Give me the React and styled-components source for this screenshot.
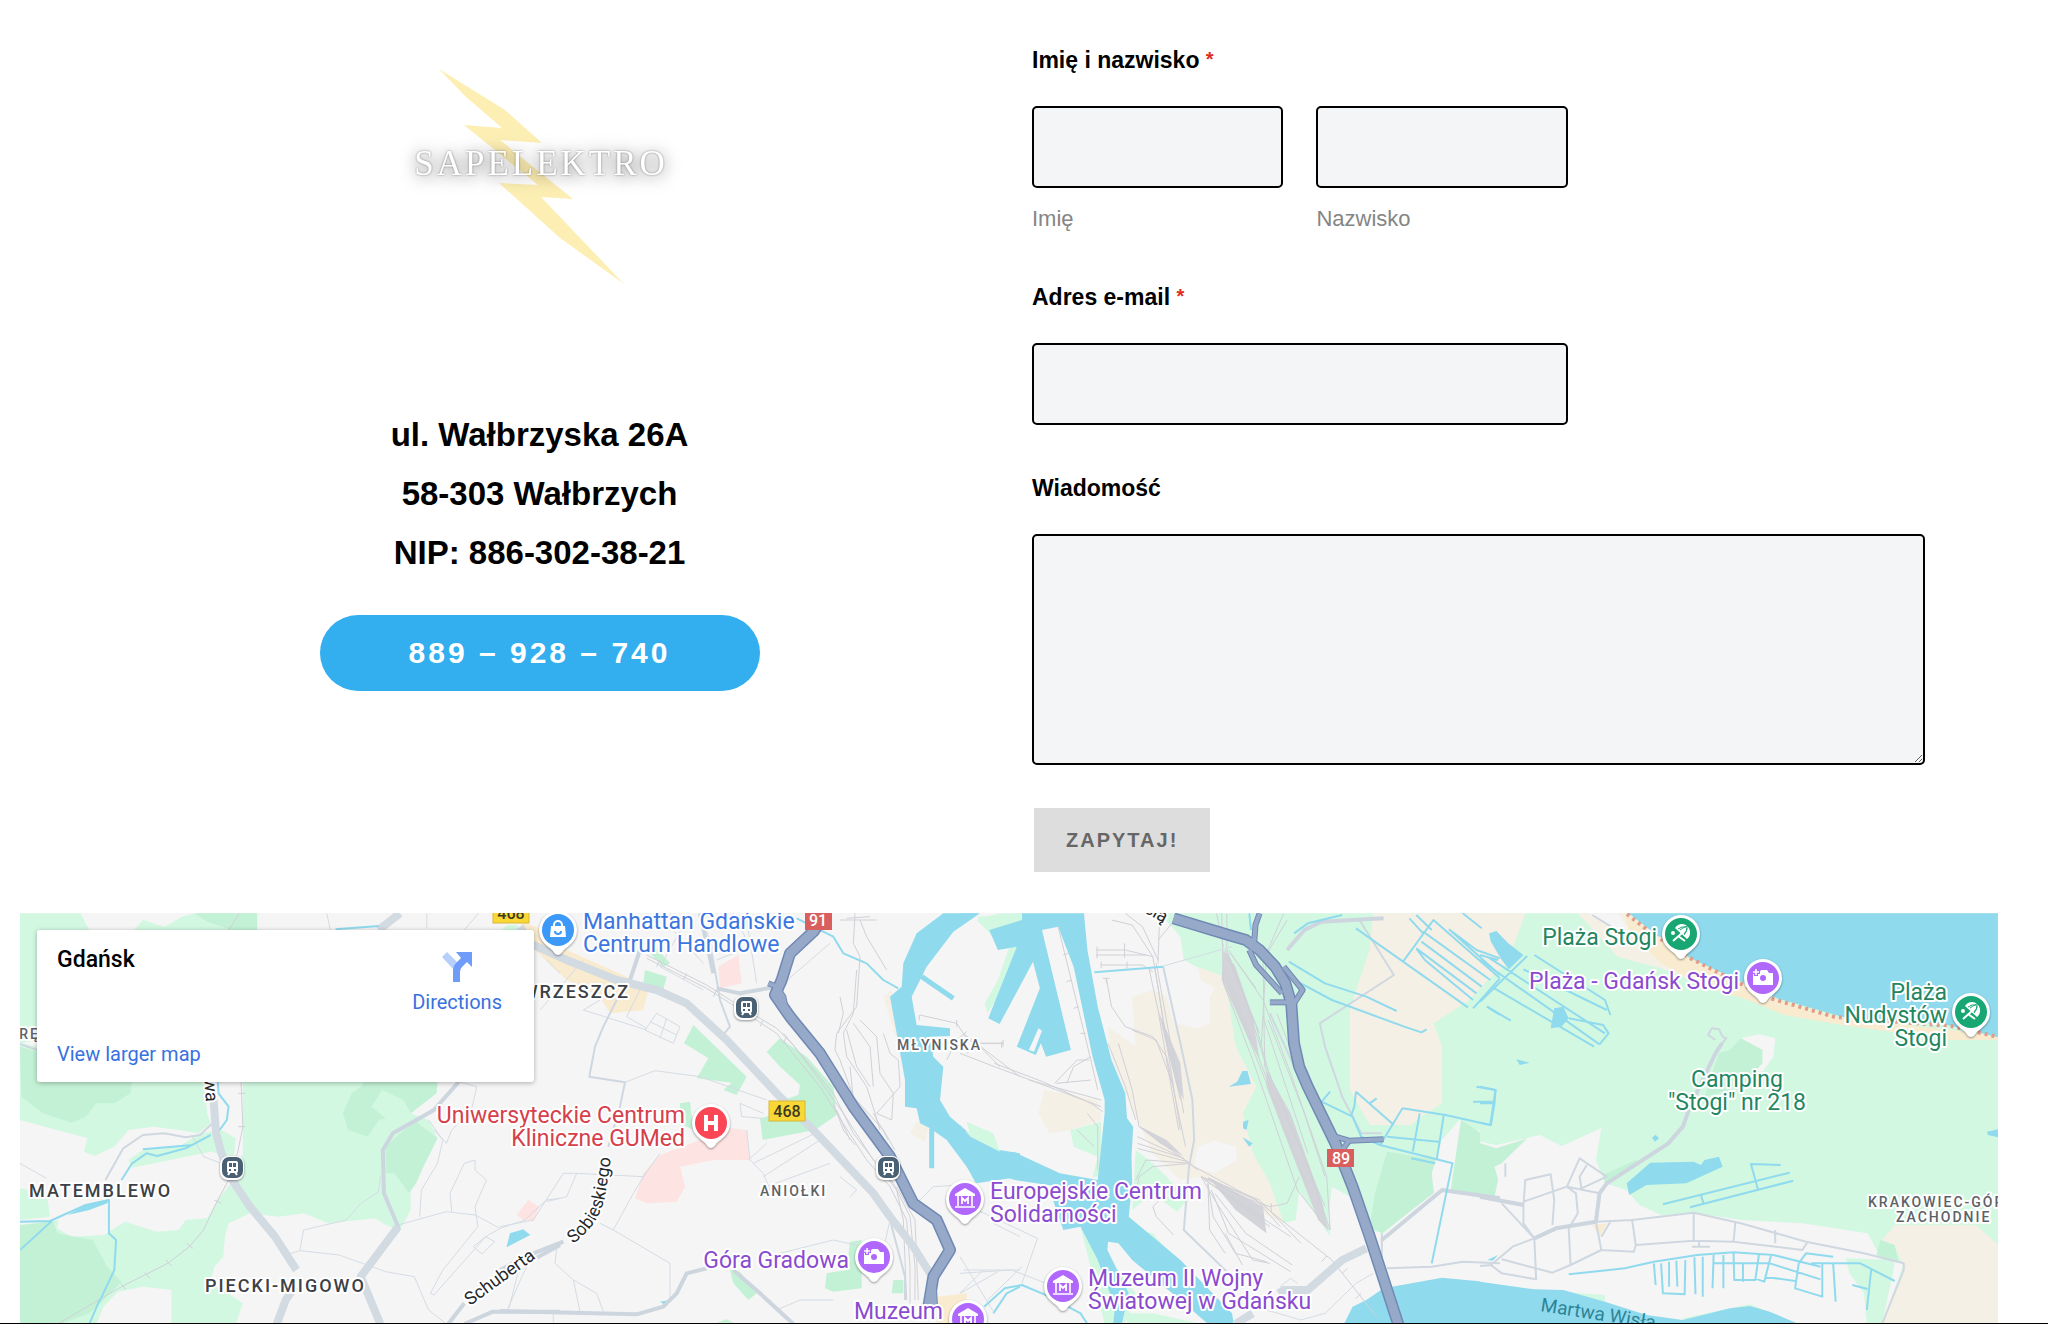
import React from "react";
import styled, { createGlobalStyle } from "styled-components";

const GlobalStyle = createGlobalStyle`
  * {
    box-sizing: border-box;
  }
  body {
    margin: 0;
    background-color: #fff;
    color: #000;
    font-family: "Liberation Sans", Arial, sans-serif;
  }
`;

const Page = styled.main`
  border-bottom: 1px solid #000;
`;
const Contact = styled.section`
  display: grid;
  grid-template-columns: 1fr 1fr;
  padding: 0 100px 41px 70px;
`;
const Company = styled.div`
  display: flex;
  flex-direction: column;
  align-items: center;
  padding-top: 40px;
`;
const Logo = styled.svg`
  width: 300px;
  height: 260px;
  margin-bottom: 105px;
`;
const LogoText = styled.text`
  font-family: "Liberation Serif", serif;
  font-size: 35px;
  letter-spacing: 3px;
  fill: #fff;
  text-anchor: middle;
  filter: drop-shadow(0 0 1px rgba(0, 0, 0, 0.4))
    drop-shadow(0 2px 8px rgba(0, 0, 0, 0.55));
`;
const Address = styled.address`
  font-size: 33px;
  font-style: normal;
  font-weight: 700;
  line-height: 59px;
  text-align: center;
`;
const Phone = styled.a`
  display: flex;
  align-items: center;
  justify-content: center;
  width: 440px;
  height: 76px;
  margin-top: 33px;
  border-radius: 38px;
  background-color: #33aeef;
  color: #fff;
  font-size: 30px;
  font-weight: 700;
  letter-spacing: 3px;
  text-decoration: none;
`;

const Form = styled.form`
  display: flex;
  flex-direction: column;
  align-items: flex-start;
  padding: 45px 23px 0;
`;
const Field = styled.div`
  width: ${({ $wide }) => ($wide ? "100%" : "60%")};
  margin: 0 0 ${({ $last }) => ($last ? "43px" : "48px")};
`;
const Label = styled.label`
  display: block;
  margin-bottom: 31px;
  font-size: 23px;
  font-weight: 700;
  line-height: 30px;
`;
const Required = styled.span`
  color: #e02b20;
  font-size: 20px;
  line-height: 1;
  vertical-align: 2px;
`;
const NameRow = styled.div`
  display: grid;
  grid-template-columns: 1fr 1fr;
  gap: 33px;
`;
const Input = styled.input`
  display: block;
  width: 100%;
  height: 82px;
  padding: 0 16px;
  border: 2px solid #000;
  border-radius: 5px;
  background-color: #f4f5f7;
  font: inherit;
  font-size: 23px;
`;
const TextArea = styled.textarea`
  display: block;
  width: 100%;
  height: 231px;
  padding: 16px;
  border: 2px solid #000;
  border-radius: 5px;
  background-color: #f4f5f7;
  font: inherit;
  font-size: 23px;
  resize: vertical;
`;
const SubLabel = styled.label`
  display: block;
  margin-top: 16px;
  color: #858585;
  font-size: 22px;
  line-height: 30px;
`;
const Submit = styled.button`
  height: 64px;
  margin-left: 2px;
  padding: 0 32px;
  border: 0;
  background-color: #ddd;
  color: #666;
  font-family: inherit;
  font-size: 20px;
  font-weight: 700;
  letter-spacing: 2px;
`;

const Map = styled.section`
  position: relative;
  height: 410px;
  margin: 0 50px 0 20px;
  overflow: hidden;
  background-color: #f5f5f5;
`;
const MapSvg = styled.svg`
  display: block;
  width: 100%;
  height: 100%;
  font-family: Roboto, sans-serif;

  path {
    vector-effect: non-scaling-stroke;
  }
`;
const Line = styled.path`
  fill: none;
  stroke: ${({ $color }) => $color};
  stroke-width: ${({ $width }) => $width}px;
  stroke-linejoin: round;
`;
const MapLabel = styled.text`
  fill: ${({ $color }) => $color};
  font-size: ${({ $size }) => $size || 23}px;
  font-weight: ${({ $area }) => ($area ? 500 : 400)};
  letter-spacing: ${({ $area }) => ($area ? "2px" : "normal")};
  text-anchor: ${({ $anchor }) => $anchor || "start"};
  stroke: #fff;
  stroke-width: 4px;
  stroke-linejoin: round;
  paint-order: stroke;
`;
const SignText = styled.text`
  fill: ${({ $color }) => $color};
  font-size: 16px;
  font-weight: 500;
  text-anchor: middle;
`;
const PinGroup = styled.g`
  filter: drop-shadow(0 1px 1px rgba(0, 0, 0, 0.4));
`;
const MapCard = styled.div`
  position: absolute;
  top: 17px;
  left: 17px;
  display: grid;
  grid-template-columns: 1fr auto;
  align-content: space-between;
  width: 497px;
  height: 152px;
  padding: 16px 32px 14px 20px;
  border-radius: 3px;
  background-color: #fff;
  box-shadow: 0 1px 5px rgba(0, 0, 0, 0.3);
  font-family: Roboto, sans-serif;
`;
const Place = styled.h2`
  margin: 0;
  font-size: 23px;
  font-weight: 500;
  line-height: 28px;
`;
const MapLink = styled.a`
  color: #3871e0;
  font-size: 20px;
  line-height: 28px;
  text-decoration: none;
`;
const Directions = styled(MapLink)`
  display: flex;
  flex-direction: column;
  align-items: center;
  gap: 6px;
  padding-top: 6px;
`;

const fills = {
  base: "#f5f5f5",
  green: "#d2f8e2",
  wood: "#c3f1d5",
  sand: "#f5f0e5",
  beach: "#f9ebcf",
  pink: "#fde3e1",
  water: "#90daee",
  rail: "#d3d4da",
};

const strokes = {
  thin: ["#d5dce4", 1],
  street: ["#cfd7e0", 2],
  road: ["#cdd5de", 4],
  main: ["#d2dae2", 8],
  rail: ["#d0d1d7", 1],
  canal: ["#90daee", 2],
  dock: ["#90daee", 5],
};

// every tile keeps its own grid; x is the left edge, sx the horizontal scale
const tiles = [
  {
    x: 0,
    sx: 2.8,
    areas: [
      ["green", "M56 40H225L250 90H104V420L56 430ZM375 90L400 60L460 80L510 50L545 40H720V90Z"],
      ["wood", "M545 40H720V90H650L580 65Z"],
      ["green", "M56 430L104 440V545H570L580 640L590 670L555 700L500 690L430 680L360 690L320 740L265 768L235 755L245 715L56 660Z"],
      ["wood", "M56 440L104 455V545H370L365 580L320 610H270L240 650L200 668L120 640L60 590Z"],
      ["green", "M680 545H1225L1222 580L1150 640L1200 660L1225 715L1190 790L1150 860V930L1120 990L1080 975L1050 955L920 970L850 940L780 950L700 940L640 970L630 1010L625 1070L600 1100L590 1140L610 1160L680 1210L660 1272H480V1170L400 1160L330 1175L290 1220L270 1272H56V975L165 960L160 985L200 1010L290 1005L350 965L440 995L500 990L520 960L580 955L610 900L660 830L680 760Z"],
      ["wood", "M56 975L150 965L160 1000L210 1010L260 1020L300 1100L340 1145L290 1200L250 1240L170 1272H56Z"],
      ["green", "M56 865L130 880L135 910L140 950L56 960ZM360 780L400 750L500 740L560 700L620 690L660 715L655 770L590 755L520 770L370 803Z"],
      ["wood", "M1010 560L1020 545H1225L1222 580L1150 640L1130 600L1070 570L1040 620L1080 655L1060 660L1030 710L975 690L960 640L985 580ZM1120 700L1165 665L1225 715L1190 790L1165 850L1145 880L1105 820H1080V740Z"],
      ["pink", "M1447 945L1480 900L1510 925L1470 965Z"],
      ["water", "M1418 1042L1428 1000L1465 988L1485 1005ZM190 945L240 915L305 898L300 910L250 930Z"],
    ],
    lines: [
      ["thin", "M56 790L130 835M540 712L570 770L620 790M840 1050L850 990L970 960L1010 910L1060 875L1065 830M800 1065L840 1052L950 1065L1080 1115L1160 1130L1200 1230L1250 1272M1115 975L1250 935L1330 945L1400 985L1470 960L1530 900L1568 895M1175 950L1180 870L1225 790L1240 720L1200 660M1265 935L1260 880L1300 790L1330 780V810L1362 840L1330 920L1338 980L1240 1110L1205 1180L1215 1185L1360 1010L1400 985M1285 545L1335 560L1320 630L1265 690L1250 730L1215 690M915 40L925 90M1195 40V85M1340 40L1300 90M1425 1225L1450 1120L1495 1080M1325 1040L1360 1010L1385 1025L1350 1062Z"],
      ["rail", "M675 545L680 680L665 760L635 850L605 910L570 990L530 1040L470 1090L340 1160L165 1270M670 40L640 90M667 580H687M667 680H687M600 900L620 910M523 1030L540 1045M465 1080L480 1098M405 1118L420 1135M338 1150L352 1168"],
      ["street", "M295 840L345 745L400 705L460 700L520 712L560 705L595 670M56 432L104 450"],
      ["road", "M1010 1130L1115 980L1075 880L1072 750L1100 700L1150 670L1215 630L1285 545M1500 1075L1568 1035M1255 1272L1300 1210M1300 1272L1380 1235H1568"],
      ["main", "M598 600L605 700L620 760L650 840L700 920L770 1010L830 1110M1115 980L1010 1130L1065 1272M825 1160L800 1200L775 1272M1120 40L1060 90"],
      ["canal", "M56 965L140 963L240 915L305 900V1000L325 1020L320 1110L285 1190L275 1210L250 1272M56 1050L145 963M340 840L370 790L410 760L440 768L520 745L590 705M400 748L540 735M610 545L612 580L640 620L635 660L615 690M940 88L1060 78"],
    ],
    highways: [],
    ramps: [],
  },
  {
    x: 500,
    sx: 3,
    areas: [
      ["beach", "M60 65L110 80L200 150L380 230L445 270L430 330L330 340L300 290L200 240L105 150Z"],
      ["green", "M5 90L20 75H55L50 90Z"],
      ["wood", "M435 210L500 230L490 270L430 250ZM440 110L510 190L490 200L440 150ZM580 375L740 530L710 585L670 570L695 548L590 535L625 475L552 430ZM840 415L800 455L840 500L900 555L895 585L850 600L840 640L780 655L788 720L945 690L1010 645L1000 560L920 470ZM540 610L570 605L580 690L540 670ZM1050 1025L1085 1020V1165L1000 1175L975 1165L980 1120L1040 1110ZM690 1110L720 1115L770 1180L745 1200L700 1150ZM1180 1140H1210V1180H1175ZM650 1268L680 1258L700 1268Z"],
      ["pink", "M655 200L715 165L725 250L660 265ZM740 690L748 780L640 780L540 800L555 860L530 905L440 910L405 895L430 820L480 765L560 735L690 685ZM50 945L85 900L118 920L100 965Z"],
      ["beach", "M1310 1190L1400 1180V1272H1310Z"],
      ["sand", "M1150 290L1175 270L1215 540L1190 420ZM1250 665L1285 680L1275 725L1230 700Z"],
      ["green", "M1430 60L1500 40H1560V80L1480 110ZM1400 665L1480 700L1500 760L1420 740Z"],
      ["water", "M1330 40L1250 100L1210 190L1205 260L1170 290L1190 400L1215 540V620L1250 625L1260 670L1290 685L1340 720L1400 800L1430 850L1560 830V760L1440 740L1420 710L1350 650L1320 600L1330 500L1300 470L1290 410L1350 408V385L1250 375L1235 290L1280 200L1360 95L1440 40ZM480 1205L510 1200L495 1215Z"],
    ],
    lines: [
      ["thin", "M375 547L465 512L600 530L800 600M740 690L750 780L790 820L810 870M0 980L100 960L190 820H230L430 830L480 760M230 820L200 890L140 905M170 1045L165 1090L220 1140L240 1235M220 1140L290 1180L310 1235M300 970L340 990L510 1090V1200M340 990L400 880L440 815M945 700L760 790M960 720L790 830M990 790L800 860M1020 830L1070 870L1050 890M720 610L790 640M600 40L640 150M740 60L770 250M850 250L990 130M470 340L540 380L520 430L435 390ZM500 355L480 415M450 365L530 405M120 330L250 180M800 1070L1000 1020L1090 1040M1250 910L1300 860L1380 855M1170 960L1150 1050M1390 1110H1560M1380 1180L1450 1110M1480 970L1560 1010M830 1230L900 1200H1000M20 1235L70 1120L100 1070M510 40L520 90L610 190M560 60L480 200L610 270M700 40L750 140L650 180M180 220L140 180M160 1240V1268M720 610L725 650L785 655M800 730L745 780M420 270L380 350L440 385M300 300L250 330L440 390"],
      ["rail", "M440 165L520 205L620 255L730 325L830 385L880 435L970 555L1030 640L1120 780L1180 850L1230 950L1245 1100V1200M440 175L520 215L620 265L730 335L830 400L960 560L1010 640L1100 780L1170 860L1220 960L1230 1100V1210M850 400L1000 580L1060 700L1190 870L1210 960L1220 1200M1190 860L1245 960L1255 1200M1065 40L1060 130L1080 170L1070 320L1010 400L1005 450L1020 480L1060 590L1150 690L1185 750M1080 60L1100 110L1160 210M1070 210L1060 340L1030 400L1040 470L1100 560L1125 640L1140 690M1060 370L1110 440L1120 560M1080 360L1130 410L1140 520L1180 580L1175 660L1130 640M1040 390L1070 500L1110 560M1150 400L1170 460L1195 480L1200 560L1130 640M1120 640L1165 720M1010 630L1050 720M1000 610L1030 690L1065 735M1260 345L1370 370L1390 400L1560 530M1400 395L1370 420L1340 480M1440 430H1510M1430 440L1400 460M1390 405L1450 450L1500 500M1020 60H1130M1040 55L1110 50M1020 290L1030 340L1015 400M1050 500L1060 600M1505 425V445M1258 345V360M1370 360V380M480 180L470 200M560 220L550 240M650 270L640 290M790 360L780 380M860 410L850 430"],
      ["street", "M420 150L390 240L350 300L310 380L285 440L268 530L375 547L360 620L325 740M630 130L650 240L660 300L690 380L665 410M1170 960L1215 1130V1200M1170 1060L1150 1050"],
      ["road", "M650 265L720 280L830 260M0 1233L410 1243L490 1220L530 1180L560 1120L620 1105M700 1110L780 1180L880 1272M190 1025L100 1060L0 1110M390 240L420 150M600 40L640 220"],
      ["main", "M60 80L90 130L200 180L350 240L470 270L560 310L680 420L830 580L940 690L1120 880L1170 950L1240 1040L1290 1120"],
      ["canal", "M890 55L1000 110L1030 160L1100 190L1150 240L1195 265M1560 1160L1520 1180L1480 1240"],
      ["dock", "M1265 230L1360 295M1295 685V805"],
    ],
    highways: ["M965 60L940 95L870 160L845 240L825 285L870 350L960 460L1060 620L1170 770L1240 910L1310 960L1350 1050L1300 1130L1285 1220"],
    ramps: ["M805 250L830 260L850 290L858 330", "M1300 1130L1305 1220"],
  },
  {
    x: 960,
    sx: 2.904,
    areas: [
      ["green", "M580 40H1568V700L1500 690L1450 660L1400 720L1370 820L1380 870L1230 1000L1190 990L1150 900L1080 860L1070 960L1075 1010L985 870L975 960L940 970L900 860L850 760L820 640L860 560L800 440L740 230L650 180L640 110Z"],
      ["wood", "M1240 755L1385 780L1375 880L1225 1000L1190 980L1205 880ZM1455 660L1500 690L1568 740V895L1420 870L1440 720Z"],
      ["base", "M1455 660L1425 870L1375 870L1370 820L1400 720Z"],
      ["sand", "M1200 40H1568V200L1480 300L1375 370L1400 440V610L1340 650L1310 675H1190L1132 570V330L1160 240L1190 150Z"],
      ["sand", "M690 200L770 230L800 440L860 560L820 640L850 760L900 850L940 970L860 930L790 900L700 830L640 840L560 760L510 650L440 470L430 380L510 440L500 290L560 270L600 290L620 370L690 385L725 370V290L740 265L700 240Z"],
      ["sand", "M245 570L400 600L410 660L320 690L260 700L228 640Z"],
      ["green", "M320 690L410 665V830H385L400 770L330 740ZM510 750L560 790L600 830L660 900L630 935L560 880L500 930ZM500 985L560 1000L610 1060L520 1000ZM50 50L180 40V100L100 120ZM110 240L150 120H200L110 290L80 340L72 310ZM0 690L100 710L120 765L40 740ZM350 980L370 990L510 1180L480 1272H420ZM485 1240L560 1240L700 1272H485Z"],
      ["base", "M690 740L740 722L800 740L805 780L740 820L680 800Z"],
      ["water", "M180 40H360L370 150L400 320L440 480L480 580L485 655L503 680L498 770L500 850L490 950L640 1080L790 1240L795 1272H720L640 1200L500 1080L460 1030L430 1025L428 1050L490 1180L470 1272H445L450 1220L400 1080L350 980L300 990L270 900L290 860L160 840L110 825L45 848L0 760V675L30 710L145 770L155 755L290 820L400 840L420 640V600L385 470L330 200L285 80L238 90L322 450L250 470L235 430L220 465L165 440L232 265L212 185L115 372L82 355L165 140L110 150L85 90L180 60ZM0 40H50L0 80Z"],
      ["base", "M228 385L238 392L215 455L200 450Z"],
      ["water", "M820 513H835L845 552L780 560L805 545ZM822 665L838 660L832 690L822 685ZM820 712L850 730L840 740ZM1535 100L1568 95V130ZM1115 1272L1140 1220L1180 1200L1230 1165L1400 1133L1568 1150V1272ZM1530 1080L1568 1065L1550 1085Z"],
      ["rail", "M890 510L960 640L1050 900L1070 990L1040 960L960 750L890 560ZM765 150L800 200L850 350L870 480L830 400L760 240ZM575 330L640 490L650 600L630 560L600 440ZM515 675L600 720L650 770L580 730ZM720 830L880 920L890 1000L800 930Z"],
    ],
    lines: [
      ["thin", "M0 1070L100 1240M50 930L225 1015L180 1150M0 1120L150 1110L250 1150M0 1180L110 1115M80 1200L180 1100M930 1160L960 1135L980 1150M890 1230L990 1260L1060 1240L1150 1150L1200 1120"],
      ["rail", "M745 40L765 140M760 40L765 250L850 480L980 870L1070 990M775 40V150L830 300L890 500L1000 770L1075 990M770 150L860 380L900 530L1060 920M780 150L880 300L960 520L1065 830L1075 990M785 160L860 265M950 60L880 180L885 500L930 640M940 40L890 160L875 440M895 360L1000 640L1060 830M765 200L900 560M770 230L840 420L1010 860M775 160L870 400M920 340L1040 660M880 350L1010 760M440 60L500 75L560 170L575 260L600 430L640 690M480 40L530 80L575 180M580 40L575 190M640 40L575 120M550 210L575 330L620 600L635 690M565 200L600 420L640 600M570 190L610 420L650 640M425 235L440 320L480 380L560 410L600 470L655 740M500 390L570 420L620 560M460 430L500 570L520 680L680 800L860 900L1080 1080L1210 1250M430 430L480 560L510 660M515 710L640 770L690 810M515 730L650 775M515 745L660 785M700 830L870 900L990 1030M700 830L740 900L850 1080L900 1090M720 850L735 950L800 1060L890 1085M720 850L725 990L770 1060M730 870L780 1000L960 1115M740 880L830 1000L965 1095M710 840L960 1010M720 835L860 900L930 980M740 860L880 950M700 830L900 980M770 1000L820 1095M395 150H480L560 170M395 165H540M410 195H530L560 215M398 140V175M478 130V175M485 185V205M410 185V205M425 235V250M415 235H435M370 640L400 680V810M340 690L390 740M0 460L100 500L230 550L410 620M100 490L240 545L380 610L415 635M200 540L410 600M275 550L340 480L375 480M280 550L380 540M310 550L330 500L380 470M60 430H125M125 420V440M285 80L380 480L400 570M300 165L315 160M310 245L325 240M330 325L345 320M365 400H350M670 790L560 800L520 830L510 890M670 790L540 780L510 840M700 830L820 890L900 920L950 910L985 830M600 880L560 920L570 950L620 1005M904 910V935M1050 1085L1065 1068M1110 1120L1125 1105M1150 1195L1165 1180"],
      ["street", "M1160 60L1260 225L1045 370L1060 440L1110 590L1165 700H1225M590 200L640 430L675 600L680 720L665 800L650 990L790 1130M1240 1105L1370 1100L1460 1085L1568 1090M1225 1000V1090M900 340L1010 590L1080 730"],
      ["road", "M1225 1020L1400 870L1568 895M1230 55L1050 65L1000 90L950 150"],
      ["main", "M800 1272L850 1240M925 1180L940 1170L1010 1170L1110 1080L1180 1045"],
      ["canal", "M390 217L590 200M955 185L1060 250L1180 290L1268 333M980 245L1080 300L1290 380L1340 397L1355 388M1150 85L1475 322M1285 187L1375 60L1568 235M1345 95L1540 240M1340 125L1515 260M1325 145L1500 280M1305 55L1345 100M1325 45L1370 90M1325 145L1350 180L1490 300M1420 88L1568 225M1420 88L1500 150L1568 175M1490 325L1568 235M1460 40L1515 85M1530 320L1568 345M1075 575L1050 605L1140 650L1165 710L1220 735L1430 790L1370 1090M1150 575L1145 620L1135 650M1150 575L1260 675M1190 610L1210 595M1285 625L1220 735M1285 625L1410 645L1540 675L1555 570L1500 560M1335 640L1315 755M1405 645L1385 775M1240 710L1390 725M1310 775L1380 790M970 100L1010 70L1110 45M1490 605H1550M840 40L845 90M70 1220L130 1165L180 1155L260 1190L350 1240L370 1272"],
      ["thin", "M590 198L790 140"],
    ],
    highways: ["M620 55L780 105L830 120L870 150L915 200L945 250L962 310L970 430L985 500L1010 560L1090 730L1140 860L1190 1010L1275 1280"],
    ramps: ["M870 40L858 75L855 120L820 120", "M840 150L860 195L935 280", "M940 200L995 270L970 310", "M900 307H950", "M1090 710L1130 722L1230 718", "M1110 750L1130 722"],
  },
  {
    x: 1480,
    sx: 2.761,
    areas: [
      ["green", "M50 40H1430V1272H0V350L50 250Z"],
      ["sand", "M0 40H125L75 190L0 260ZM270 40H410L560 150L740 300L500 205L380 170Z"],
      ["base", "M300 40H380L420 100L350 75Z"],
      ["beach", "M400 40L560 150L790 290L1000 355L1430 405V420H1300L1000 375L840 345L740 300L600 250L500 190L410 90Z"],
      ["water", "M410 40H1430V412L1290 375L1000 350L820 295L580 175L470 90Z"],
      ["base", "M0 725L45 735L165 705L225 738L335 685L320 780L345 850L405 870L440 915L500 945L590 938L720 960L890 970L1070 1000L1110 1080L1170 1090L1110 1272H0ZM720 415L770 403L815 415L810 470L780 515H760L780 450Z"],
      ["wood", "M690 450L720 415L780 450V490L720 560L620 590L640 520L660 460ZM0 730L45 745L130 715L60 790L40 800L50 840L40 890H0ZM345 850L340 825L430 780L440 790Z"],
      ["sand", "M1145 975H1370L1430 1035V1272H1110L1170 1100L1145 1040L1110 1020Z"],
      ["green", "M1010 1075L1145 1080L1140 1120L1110 1272H1068L1060 1180L1020 1120ZM220 1175L345 1185V1205ZM560 1255L745 1213L880 1272H560Z"],
      ["wood", "M1105 1020L1145 1035L1155 1085L1095 1065Z"],
      ["beach", "M310 975L350 970L330 1010Z"],
      ["water", "M0 1145L150 1168L230 1170L345 1205L460 1245L560 1260L690 1225L745 1218L800 1235L880 1272H0ZM405 850L470 788L590 785L610 795L620 780L660 770L670 800L570 850L460 855L412 885ZM25 100L45 93L78 130L120 165L80 208L60 180L30 125ZM205 325L230 320L245 355L225 380L195 385ZM1400 695L1430 688V712L1402 705ZM100 478L138 488L110 495ZM475 713L485 704L494 715L483 725ZM20 1080L50 1065L35 1082Z"],
    ],
    lines: [
      ["street", "M60 910L150 1015L155 1138L60 1120L30 1095L90 1040L150 1015M120 915L125 840L195 823L205 900L200 975M120 915V970L150 1015M0 1098L30 1095M120 905L240 860L275 775L350 830L280 865L275 830L295 795M240 860L265 880L270 940L245 985L250 1095L200 1118L60 1078M240 860L330 880M320 965L335 1050L425 1055L430 1035L420 960L590 938L720 970L900 1025L1060 1060L1170 1090V1110L1110 1272M590 938V1022L430 1035M590 1022L700 1025L705 968M700 1025L890 1050L905 1025M815 990V1030M320 965L420 960M335 1050L250 1095M360 965L335 1010M585 1040H635M605 1022V1040M665 435L680 415L670 410L660 388L640 385L630 405L650 420M70 790V830M310 45L370 85"],
      ["road", "M0 890L120 915M150 1015L210 985L320 965L330 880L350 850L520 730L560 680L580 620L650 460L668 430"],
      ["canal", "M0 305L130 168M0 180L330 433M20 170L345 400M150 165L345 300L360 345M120 208L350 330M20 320L85 362M40 265L315 440M0 165L50 180M245 355L340 375L355 400L330 433M0 560L43 570L40 610H0M40 610L30 675L0 668M505 913L855 818M580 922L865 842M830 795L748 792L768 870M610 885L617 910M245 1123L400 1105L480 1085L600 1065L700 1057L810 1065L940 1100M480 1090L485 1155M500 1090L505 1180L565 1183L567 1080M522 1085V1160M542 1082L545 1160M592 1072L595 1183M615 1070V1190M645 1065L642 1165M672 1065V1165M700 1060L702 1140H760L770 1065M726 1090V1145M645 1090H800L940 1138M803 1068L785 1145L758 1135M785 1130L870 1143M975 1070L900 1060L880 1090L870 1165L945 1190V1090M975 1090L982 1205M915 1090H1050L1145 1143M1080 1110L1068 1230M1028 1155L1070 1167"],
    ],
    highways: [],
    ramps: [],
  },
];

const dark = "#3c4146";
const grey = "#5d6267";
const purple = "#8b4bd0";
const green = "#23865f";
const red = "#d6404b";
const blue = "#3b76e0";

const labels = [
  { x: 29, y: 1197, text: "MATEMBLEWO", color: dark, size: 18, area: true },
  { x: 205, y: 1292, text: "PIECKI-MIGOWO", color: dark, size: 18, area: true },
  { x: 630, y: 998, text: "WRZESZCZ", color: dark, size: 18, area: true, anchor: "end" },
  { x: 40, y: 1039, text: "RĘ", color: grey, size: 14, area: true, anchor: "end" },
  { x: 760, y: 1196, text: "ANIOŁKI", color: grey, size: 14, area: true },
  { x: 897, y: 1050, text: "MŁYNISKA", color: grey, size: 14, area: true },
  { x: 1868, y: 1207, text: "KRAKOWIEC-GÓRKI", color: grey, size: 14, area: true },
  { x: 1896, y: 1222, text: "ZACHODNIE", color: grey, size: 14, area: true },
  { x: 583, y: 929, text: "Manhattan Gdańskie", color: blue },
  { x: 583, y: 952, text: "Centrum Handlowe", color: blue },
  { x: 685, y: 1123, text: "Uniwersyteckie Centrum", color: red, anchor: "end" },
  { x: 685, y: 1146, text: "Kliniczne GUMed", color: red, anchor: "end" },
  { x: 849, y: 1268, text: "Góra Gradowa", color: purple, anchor: "end" },
  { x: 943, y: 1319, text: "Muzeum", color: purple, anchor: "end" },
  { x: 990, y: 1199, text: "Europejskie Centrum", color: purple },
  { x: 990, y: 1222, text: "Solidarności", color: purple },
  { x: 1088, y: 1286, text: "Muzeum II Wojny", color: purple },
  { x: 1088, y: 1309, text: "Światowej w Gdańsku", color: purple },
  { x: 1657, y: 945, text: "Plaża Stogi", color: green, anchor: "end" },
  { x: 1739, y: 989, text: "Plaża - Gdańsk Stogi", color: purple, anchor: "end" },
  { x: 1947, y: 1000, text: "Plaża", color: green, anchor: "end" },
  { x: 1947, y: 1023, text: "Nudystów", color: green, anchor: "end" },
  { x: 1947, y: 1046, text: "Stogi", color: green, anchor: "end" },
  { x: 1737, y: 1087, text: "Camping", color: green, anchor: "middle" },
  { x: 1737, y: 1110, text: '"Stogi" nr 218', color: green, anchor: "middle" },
];

const pins = [
  { x: 558, y: 930, color: "#3d99f8", icon: "bag" },
  { x: 711, y: 1123, color: "#fb4655", icon: "hospital" },
  { x: 874, y: 1257, color: "#b067fb", icon: "camera" },
  { x: 965, y: 1199, color: "#b067fb", icon: "museum" },
  { x: 968, y: 1319, color: "#b067fb", icon: "museum" },
  { x: 1063, y: 1286, color: "#b067fb", icon: "museum" },
  { x: 1681, y: 934, color: "#18a673", icon: "beach" },
  { x: 1763, y: 978, color: "#b067fb", icon: "camera" },
  { x: 1971, y: 1012, color: "#18a673", icon: "beach" },
];

const trains = [
  { x: 232, y: 1168 },
  { x: 746, y: 1008 },
  { x: 888, y: 1168 },
];

function PinIcon({ icon, color }) {
  if (icon === "bag") {
    return (
      <g>
        <path d="M-7 -4H7L8 7H-8Z" fill="#fff" />
        <path d="M-4 -3V-5A4 4 0 0 1 4 -5V-3" fill="none" stroke="#fff" strokeWidth="2" />
        <path d="M-3 1A3 3 0 0 0 3 1" fill="none" stroke={color} strokeWidth="2" />
      </g>
    );
  }
  if (icon === "hospital") {
    return <path d="M-5 -8V8M5 -8V8M-5 0H5" fill="none" stroke="#fff" strokeWidth="4" />;
  }
  if (icon === "camera") {
    return (
      <g>
        <path d="M-10 -5H-4L-2 -8H4L6 -5H10V7H-10Z" fill="#fff" />
        <circle cy="0" r="3" fill={color} />
        <path d="M-7 -10V-2M-11 -6H-3" stroke={color} strokeWidth="4" />
        <path d="M-7 -9V-3M-10 -6H-4" stroke="#fff" strokeWidth="1.5" />
      </g>
    );
  }
  if (icon === "museum") {
    return (
      <g>
        <path d="M0 -11L10 -5V-3H-10V-5Z" fill="#fff" />
        <path d="M-7 -3V7M7 -3V7M-10 8H10" stroke="#fff" strokeWidth="1.6" />
        <path d="M-3 5V-1L0 2L3 -1V5" fill="none" stroke="#fff" strokeWidth="1.8" />
      </g>
    );
  }
  return (
    <g>
      <path d="M-6 -6C-3 -11 4 -11 7 -7C10 -4 10 2 6 5Z" fill="#fff" />
      <path d="M1 -1L-8 7M-3 2L4 7" stroke="#fff" strokeWidth="2" />
      <path d="M-3 -5Q1 -8 5 -7M3 1Q6 -2 6 -6M-1 -4Q5 -8 6 -8Q7 -4 3 0" fill="none" stroke={color} strokeWidth="1" />
      <circle cx="-8" cy="-1" r="2" fill="#fff" />
    </g>
  );
}

function Pin({ x, y, color, icon }) {
  return (
    <g transform={`translate(${x} ${y})`}>
      <PinGroup>
        <path d="M0 25C-3 25 -4 22 -6 20C-10 16 -19 12 -19 0A19 19 0 0 1 19 0C19 12 10 16 6 20C4 22 3 25 0 25Z" fill="#fff" />
      </PinGroup>
      <circle r="16" fill={color} />
      <PinIcon icon={icon} color={color} />
    </g>
  );
}

function Train({ x, y }) {
  return (
    <g transform={`translate(${x} ${y})`}>
      <PinGroup>
        <rect x="-12" y="-12" width="24" height="24" rx="8" fill="#fff" />
      </PinGroup>
      <rect x="-10" y="-11" width="21" height="21" rx="7" fill="#4a6073" />
      <rect x="-5" y="-7" width="11" height="12" rx="2" fill="#fff" />
      <path d="M-3 -5H0V-1H-3ZM1 -5H4V-1H1ZM-3 1H-1V3H-3ZM2 1H4V3H2Z" fill="#4a6073" />
      <path d="M-2 4L-4 7M3 4L5 7" stroke="#fff" strokeWidth="2" />
    </g>
  );
}

function Tile({ x, sx, children }) {
  return <g transform={`translate(${x} 900) scale(${1 / sx} ${1 / 3})`}>{children}</g>;
}

function CityMap() {
  return (
    <MapSvg viewBox="20 913 1978 410" preserveAspectRatio="xMidYMid slice" role="img" aria-label="Mapa">
      {tiles.map(({ x, sx, areas }) => (
        <Tile x={x} sx={sx} key={x}>
          {areas.map(([kind, d], index) => (
            <path d={d} fill={fills[kind]} key={index} />
          ))}
        </Tile>
      ))}
      {tiles.map(({ x, sx, lines }) => (
        <Tile x={x} sx={sx} key={x}>
          {lines.map(([kind, d], index) => (
            <Line d={d} $color={strokes[kind][0]} $width={strokes[kind][1]} key={index} />
          ))}
        </Tile>
      ))}
      {tiles.map(({ x, sx, highways, ramps }) => (
        <Tile x={x} sx={sx} key={x}>
          {ramps.map(d => (
            <Line d={d} $color="#7089b4" $width={6} key={d} />
          ))}
          {highways.map(d => (
            <Line d={d} $color="#7089b4" $width={12} key={d} />
          ))}
          {ramps.map(d => (
            <Line d={d} $color="#96a9c9" $width={4} key={`${d}-top`} />
          ))}
          {highways.map(d => (
            <Line d={d} $color="#96a9c9" $width={9} key={`${d}-top`} />
          ))}
        </Tile>
      ))}
      <Line
        d="M1627 914L1650 932L1690 958L1733 980L1773 999L1835 1017L1951 1026L1998 1037"
        $color="#e39a88"
        $width={4}
        strokeDasharray="3 4"
      />

      <rect x="769" y="1101" width="36" height="20" fill="#f9d734" stroke="#d9b83a" />
      <SignText x="787" y="1117" $color="#3c3a20">468</SignText>
      <rect x="493" y="903" width="36" height="20" fill="#f9d734" stroke="#d9b83a" />
      <SignText x="511" y="919" $color="#3c3a20">468</SignText>
      <rect x="805" y="911" width="27" height="19" fill="#d95f5f" />
      <SignText x="818" y="926" $color="#fff">91</SignText>
      <rect x="1327" y="1149" width="27" height="18" fill="#d95f5f" />
      <SignText x="1341" y="1164" $color="#fff">89</SignText>

      {labels.map(({ x, y, text, color, size, area, anchor }) => (
        <MapLabel x={x} y={y} $color={color} $size={size} $area={area} $anchor={anchor} key={`${text}-${y}`}>
          {text}
        </MapLabel>
      ))}
      <path id="sobieskiego" d="M573 1244Q600 1224 605 1196T613 1140" fill="none" />
      <MapLabel $color="#26292c" $size={18}>
        <textPath href="#sobieskiego">Sobieskiego</textPath>
      </MapLabel>
      <MapLabel transform="translate(470 1306) rotate(-36)" $color="#26292c" $size={18}>
        Schuberta
      </MapLabel>
      <MapLabel transform="translate(206 1102) rotate(86)" $color="#26292c" $size={18} $anchor="end">
        wa
      </MapLabel>
      <MapLabel transform="translate(1164 923) rotate(28)" $color="#26292c" $size={18} $anchor="end">
        cią
      </MapLabel>
      <text transform="translate(1540 1311) rotate(9)" fill="#2b8496" fontSize="19">
        Martwa Wisła
      </text>

      {trains.map(train => (
        <Train {...train} key={train.x} />
      ))}
      {pins.map(pin => (
        <Pin {...pin} key={pin.x} />
      ))}
    </MapSvg>
  );
}

function CompanyLogo() {
  return (
    <Logo viewBox="390 40 300 260" role="img" aria-label="Sapelektro">
      <path
        d="M439 69L505 110L542 143L500 140L573 199L541 197L624 284L560 238L499 183L538 185L464 125L502 128L465 96Z"
        fill="#fdeeb3"
      />
      <LogoText x="541" y="175">SAPELEKTRO</LogoText>
    </Logo>
  );
}

function ContactForm() {
  return (
    <Form onSubmit={event => event.preventDefault()}>
      <Field>
        <Label htmlFor="first-name">
          Imię i nazwisko <Required>*</Required>
        </Label>
        <NameRow>
          <div>
            <Input id="first-name" type="text" required />
            <SubLabel htmlFor="first-name">Imię</SubLabel>
          </div>
          <div>
            <Input id="last-name" type="text" required />
            <SubLabel htmlFor="last-name">Nazwisko</SubLabel>
          </div>
        </NameRow>
      </Field>
      <Field>
        <Label htmlFor="email">
          Adres e-mail <Required>*</Required>
        </Label>
        <Input id="email" type="email" required />
      </Field>
      <Field $wide $last>
        <Label htmlFor="message">Wiadomość</Label>
        <TextArea id="message" />
      </Field>
      <Submit type="submit">ZAPYTAJ!</Submit>
    </Form>
  );
}

function App() {
  return (
    <Page>
      <GlobalStyle />
      <Contact>
        <Company>
          <CompanyLogo />
          <Address>
            ul. Wałbrzyska 26A
            <br />
            58-303 Wałbrzych
            <br />
            NIP: 886-302-38-21
          </Address>
          <Phone href="tel:889928740">889 – 928 – 740</Phone>
        </Company>
        <ContactForm />
      </Contact>
      <Map>
        <CityMap />
        <MapCard>
          <Place>Gdańsk</Place>
          <Directions href="#directions">
            <svg width="30" height="30" viewBox="0 0 30 30" aria-hidden="true">
              <path d="M0 5L5 0L16 11L11 17Z" fill="#b9cffb" />
              <path d="M11 30V19Q11 14 14 11L19 6L14 0H30V15L25 10L20 15Q18 17 18 20V30Z" fill="#6f9cf8" />
            </svg>
            Directions
          </Directions>
          <MapLink href="#map">View larger map</MapLink>
        </MapCard>
      </Map>
    </Page>
  );
}

export default App;
